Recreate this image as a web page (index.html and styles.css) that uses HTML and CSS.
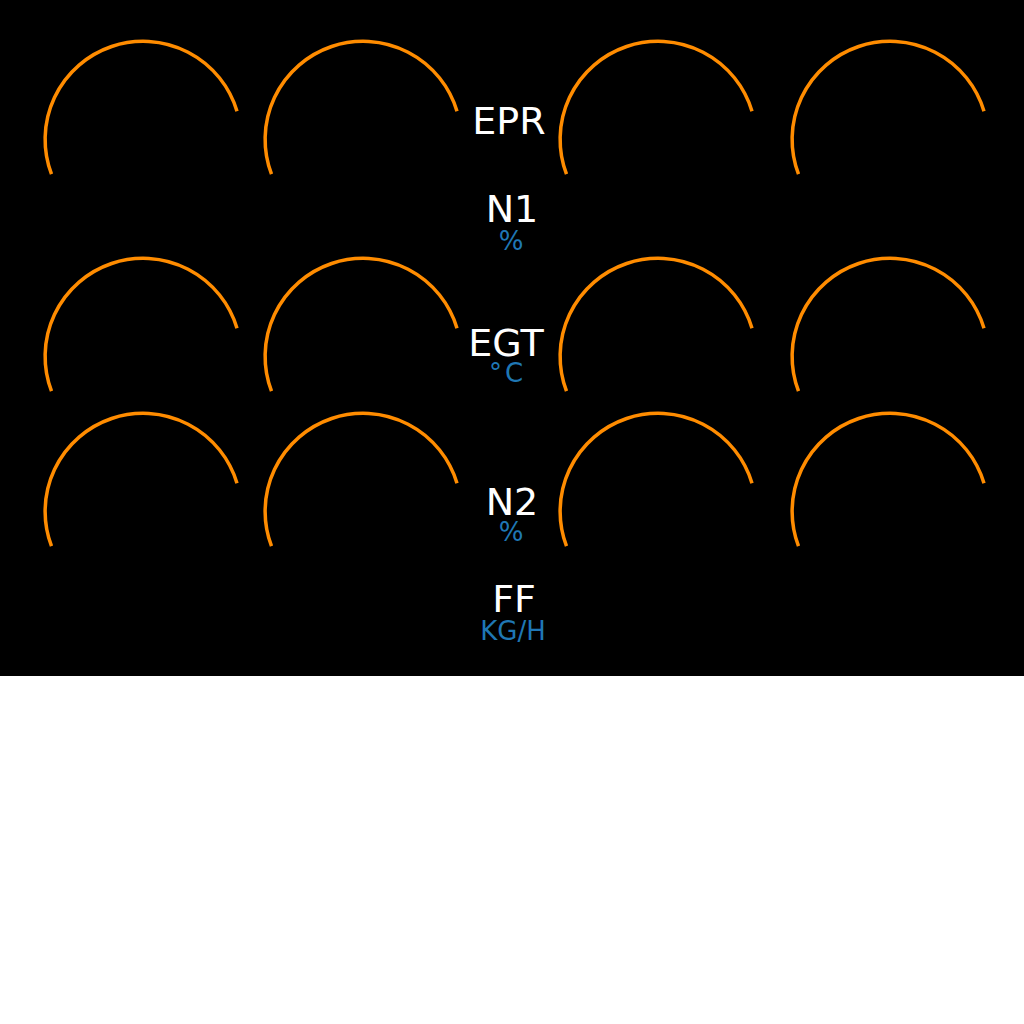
FILE: index.html
```html
<!DOCTYPE html>
<html lang="en">
<head>
<meta charset="utf-8">
<title>Engine Display</title>
<link rel="stylesheet" href="styles.css">
</head>
<body>
<div class="panel">
  <svg class="display" width="1024" height="676" viewBox="0 0 1024 676" xmlns="http://www.w3.org/2000/svg">
    <g class="arcs">
      <path d="M51.5 174.1 A98 98 0 1 1 237 111.2"/>
      <path d="M271.5 174.1 A98 98 0 1 1 457 111.2"/>
      <path d="M566.5 174.1 A98 98 0 1 1 752 111.2"/>
      <path d="M798.5 174.1 A98 98 0 1 1 984 111.2"/>

      <path d="M51.5 391.1 A98 98 0 1 1 237 328.2"/>
      <path d="M271.5 391.1 A98 98 0 1 1 457 328.2"/>
      <path d="M566.5 391.1 A98 98 0 1 1 752 328.2"/>
      <path d="M798.5 391.1 A98 98 0 1 1 984 328.2"/>

      <path d="M51.5 546.1 A98 98 0 1 1 237 483.2"/>
      <path d="M271.5 546.1 A98 98 0 1 1 457 483.2"/>
      <path d="M566.5 546.1 A98 98 0 1 1 752 483.2"/>
      <path d="M798.5 546.1 A98 98 0 1 1 984 483.2"/>
    </g>
    <g class="labels">
      <text class="name" x="509" y="134">EPR</text>
      <text class="name" x="512" y="222">N1</text>
      <text class="unit" x="511" y="250">%</text>
      <text class="name" x="506" y="356">EGT</text>
      <text class="unit" x="506" y="382">°<tspan dx="3">C</tspan></text>
      <text class="name" x="512" y="515">N2</text>
      <text class="unit" x="511" y="541">%</text>
      <text class="name" x="514" y="612">FF</text>
      <text class="unit" x="513" y="640">KG/H</text>
    </g>
  </svg>
</div>
</body>
</html>
```
FILE: styles.css
```css
html, body {
  margin: 0;
  padding: 0;
  background: #ffffff;
}

.panel {
  width: 1024px;
  height: 676px;
  background: #000000;
  overflow: hidden;
}

.display {
  display: block;
}

.arcs path {
  fill: none;
  stroke: #ff8c00;
  stroke-width: 3.5;
}

.labels text {
  font-family: "DejaVu Sans", sans-serif;
  text-anchor: middle;
}

.name {
  fill: #ffffff;
  font-size: 38px;
}

.unit {
  fill: #1f77b4;
  font-size: 26px;
}
```
